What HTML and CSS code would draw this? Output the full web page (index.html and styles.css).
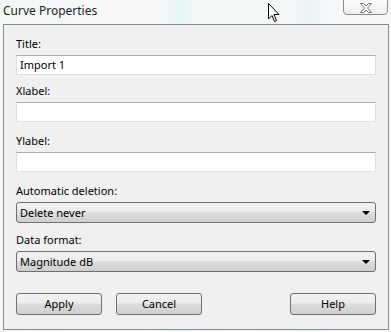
FILE: index.html
```html
<!DOCTYPE html>
<html lang="en">
<head>
<meta charset="UTF-8">
<title>Curve Properties</title>
<link rel="stylesheet" href="styles.css">
</head>
<body>
<div class="window">
  <div class="titlebar">
    <span class="caption">Curve Properties</span>
    <div class="close">
      <svg width="14" height="10" viewBox="0 0 14 10">
        <path d="M1.5 0.5 L4.5 0.5 L7 3 L9.5 0.5 L12.5 0.5 L8.5 5 L12.5 9.5 L9.5 9.5 L7 7 L4.5 9.5 L1.5 9.5 L5.5 5 Z" fill="#fff" stroke="#7a7a7a" stroke-width="1"/>
      </svg>
    </div>
  </div>

  <div class="client">
    <div class="field first">
      <label>Title:</label>
      <div class="edit">Import 1</div>
    </div>
    <div class="field">
      <label>Xlabel:</label>
      <div class="edit"></div>
    </div>
    <div class="field">
      <label>Ylabel:</label>
      <div class="edit"></div>
    </div>
    <div class="field choice">
      <label>Automatic deletion:</label>
      <div class="combo">Delete never<span class="arrow"></span></div>
    </div>
    <div class="field choice">
      <label>Data format:</label>
      <div class="combo">Magnitude dB<span class="arrow"></span></div>
    </div>
    <div class="buttons">
      <div class="button">Apply</div>
      <div class="button">Cancel</div>
      <div class="spacer"></div>
      <div class="button">Help</div>
    </div>
  </div>

  <svg class="cursor" width="14" height="22" viewBox="0 0 14 22">
    <path d="M1.5 1.5 L1.5 17 L5 13.5 L7.5 19.5 L9.5 18.5 L7 12.5 L12 12.5 Z" fill="#fff" stroke="#000" stroke-width="1" stroke-linejoin="round"/>
  </svg>
</div>
</body>
</html>
```

FILE: styles.css
```css
body { margin: 0; font-family: "Noto Sans", "Open Sans", sans-serif; font-size: 11px; color: #000; }
.window { position: relative; width: 391px; height: 332px; overflow: hidden;
  background: linear-gradient(90deg, #f3f6f7 0%, #f6f8f9 40%, #e6f5f6 46%, #f4f7f8 50%, #f3f6f7 75%, #e8f5f6 79%, #f5f7f8 84%, #f4f6f7 100%); }
.titlebar { height: 24px; display: flex; align-items: flex-start; }
.caption { margin: 3px 0 0 3px; line-height: 16px; font-size: 12px; color: #1e1e1e; }
.close { position: absolute; left: 343px; top: -1px; width: 43px; height: 14px; border: 1px solid #8e8e8e; border-radius: 0 0 4px 4px;
  background: linear-gradient(#fbfbfb, #eceef0); display: flex; justify-content: center; align-items: center; }
.close svg { margin-top: 1px; }
.client { box-sizing: border-box; margin: 0 2px 0 3px; height: 306px; border: 1px solid #8b8b8b; background: #f0f0f0; padding: 11px 12px 0 12px; }
.field { display: flex; flex-direction: column; margin-bottom: 11px; }
.field.first { margin-bottom: 8px; }
.field.choice { margin-bottom: 9px; }
.field label { line-height: 16px; margin-bottom: 3px; }
.edit { height: 18px; border: 1px solid #e0e2e8; border-top-color: #abadb3; background: #fff; line-height: 18px; padding-left: 3px; }
.combo { position: relative; height: 19px; border: 1px solid #707070; border-radius: 3px; line-height: 19px; padding-left: 3px;
  background: linear-gradient(#f2f2f2 0%, #ebebeb 45%, #dddddd 50%, #cfcfcf 100%); }
.arrow { position: absolute; right: 5px; top: 8px; width: 0; height: 0; border-left: 4px solid transparent; border-right: 4px solid transparent; border-top: 4px solid #000; }
.buttons { display: flex; gap: 14px; margin-top: 21px; }
.spacer { flex: 1; }
.button { width: 84px; height: 20px; border: 1px solid #707070; border-radius: 3px; text-align: center; line-height: 20px;
  background: linear-gradient(#f2f2f2 0%, #ebebeb 45%, #dddddd 50%, #cfcfcf 100%); }
.cursor { position: absolute; left: 267px; top: 2px; }
```
